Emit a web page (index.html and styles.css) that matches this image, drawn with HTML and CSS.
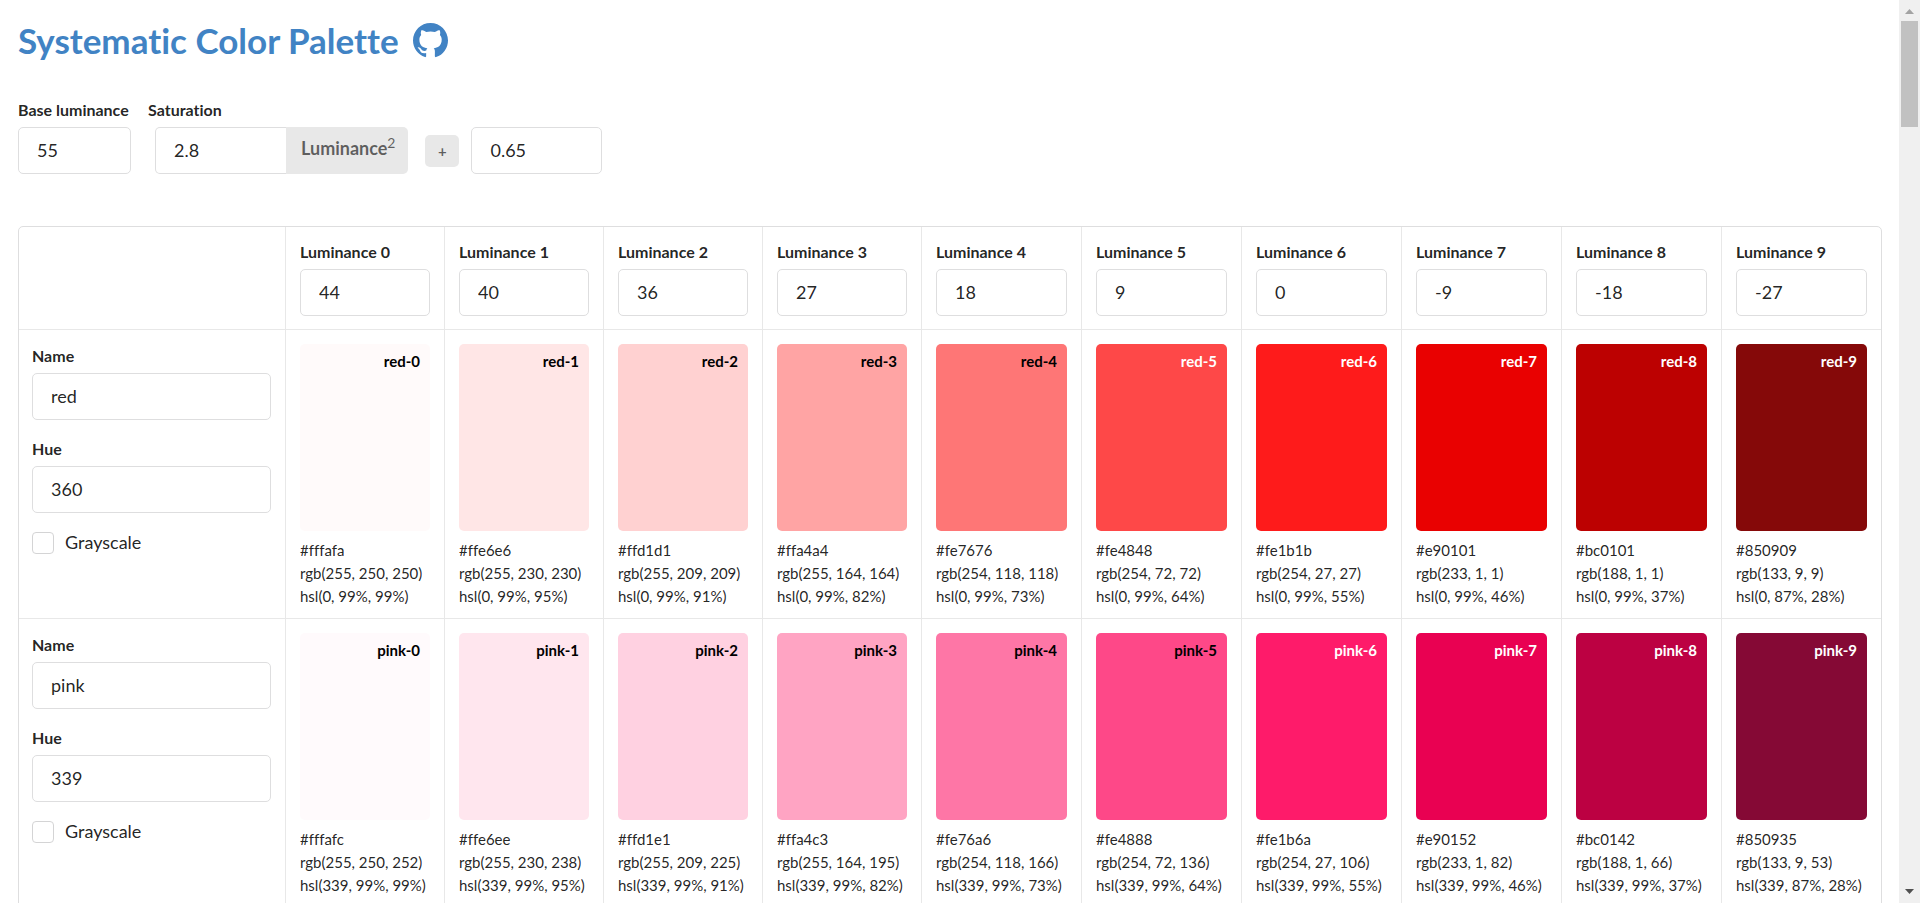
FILE: index.html
```html
<!DOCTYPE html>
<html lang="en">
<head>
<meta charset="utf-8">
<title>Systematic Color Palette</title>
<link rel="stylesheet" href="styles.css">
</head>
<body>
<div class="page">
<main class="content">
  <h1 class="title"><a class="title-link" href="#">Systematic Color Palette
    <svg class="github" viewBox="0 0 16 16" aria-hidden="true"><path fill="currentColor" d="M8 0C3.58 0 0 3.58 0 8c0 3.54 2.29 6.53 5.47 7.59.4.07.55-.17.55-.38 0-.19-.01-.82-.01-1.49-2.01.37-2.53-.49-2.69-.94-.09-.23-.48-.94-.82-1.13-.28-.15-.68-.52-.01-.53.63-.01 1.08.58 1.23.82.72 1.21 1.87.87 2.33.66.07-.52.28-.87.51-1.07-1.78-.2-3.64-.89-3.64-3.95 0-.87.31-1.59.82-2.15-.08-.2-.36-1.02.08-2.12 0 0 .67-.21 2.2.82.64-.18 1.32-.27 2-.27s1.36.09 2 .27c1.53-1.04 2.2-.82 2.2-.82.44 1.1.16 1.92.08 2.12.51.56.82 1.27.82 2.15 0 3.07-1.87 3.75-3.65 3.95.29.25.54.73.54 1.48 0 1.07-.01 1.93-.01 2.2 0 .21.15.46.55.38A8.01 8.01 0 0 0 16 8c0-4.42-3.58-8-8-8z"/></svg></a></h1>

  <form class="settings">
    <div class="field base">
      <label class="label" for="base">Base luminance</label>
      <input class="input" id="base" type="text" value="55">
    </div>
    <div class="field">
      <label class="label" for="factor">Saturation</label>
      <div class="formula">
        <div class="labeled">
          <input class="input factor" id="factor" type="text" value="2.8">
          <span class="unit">Luminance<sup class="sup">2</sup></span>
        </div>
        <span class="plus">+</span>
        <input class="input offset" type="text" value="0.65" aria-label="Saturation offset">
      </div>
    </div>
  </form>

  <table class="palette">
    <colgroup><col class="col-name"><col class="col-light" span="4"><col span="6"></colgroup>
    <thead>
      <tr>
        <th class="head"></th>
        <th class="head"><label class="label" for="l0">Luminance 0</label><input class="input" id="l0" type="text" value="44"></th>
        <th class="head"><label class="label" for="l1">Luminance 1</label><input class="input" id="l1" type="text" value="40"></th>
        <th class="head"><label class="label" for="l2">Luminance 2</label><input class="input" id="l2" type="text" value="36"></th>
        <th class="head"><label class="label" for="l3">Luminance 3</label><input class="input" id="l3" type="text" value="27"></th>
        <th class="head"><label class="label" for="l4">Luminance 4</label><input class="input" id="l4" type="text" value="18"></th>
        <th class="head"><label class="label" for="l5">Luminance 5</label><input class="input" id="l5" type="text" value="9"></th>
        <th class="head"><label class="label" for="l6">Luminance 6</label><input class="input" id="l6" type="text" value="0"></th>
        <th class="head"><label class="label" for="l7">Luminance 7</label><input class="input" id="l7" type="text" value="-9"></th>
        <th class="head"><label class="label" for="l8">Luminance 8</label><input class="input" id="l8" type="text" value="-18"></th>
        <th class="head"><label class="label" for="l9">Luminance 9</label><input class="input" id="l9" type="text" value="-27"></th>
      </tr>
    </thead>
    <tbody>
      <tr>
        <td class="cell">
          <div class="hue-form">
            <div class="field"><label class="label" for="name-red">Name</label><input class="input" id="name-red" type="text" value="red"></div>
            <div class="field"><label class="label" for="hue-red">Hue</label><input class="input" id="hue-red" type="text" value="360"></div>
            <label class="check"><input class="box" type="checkbox">Grayscale</label>
          </div>
        </td>
        <td class="cell"><div class="swatch" style="background:#fffafa">red-0</div>#fffafa<br>rgb(255, 250, 250)<br>hsl(0, 99%, 99%)</td>
        <td class="cell"><div class="swatch" style="background:#ffe6e6">red-1</div>#ffe6e6<br>rgb(255, 230, 230)<br>hsl(0, 99%, 95%)</td>
        <td class="cell"><div class="swatch" style="background:#ffd1d1">red-2</div>#ffd1d1<br>rgb(255, 209, 209)<br>hsl(0, 99%, 91%)</td>
        <td class="cell"><div class="swatch" style="background:#ffa4a4">red-3</div>#ffa4a4<br>rgb(255, 164, 164)<br>hsl(0, 99%, 82%)</td>
        <td class="cell"><div class="swatch" style="background:#fe7676">red-4</div>#fe7676<br>rgb(254, 118, 118)<br>hsl(0, 99%, 73%)</td>
        <td class="cell"><div class="swatch dark" style="background:#fe4848">red-5</div>#fe4848<br>rgb(254, 72, 72)<br>hsl(0, 99%, 64%)</td>
        <td class="cell"><div class="swatch dark" style="background:#fe1b1b">red-6</div>#fe1b1b<br>rgb(254, 27, 27)<br>hsl(0, 99%, 55%)</td>
        <td class="cell"><div class="swatch dark" style="background:#e90101">red-7</div>#e90101<br>rgb(233, 1, 1)<br>hsl(0, 99%, 46%)</td>
        <td class="cell"><div class="swatch dark" style="background:#bc0101">red-8</div>#bc0101<br>rgb(188, 1, 1)<br>hsl(0, 99%, 37%)</td>
        <td class="cell"><div class="swatch dark" style="background:#850909">red-9</div>#850909<br>rgb(133, 9, 9)<br>hsl(0, 87%, 28%)</td>
      </tr>
      <tr>
        <td class="cell">
          <div class="hue-form">
            <div class="field"><label class="label" for="name-pink">Name</label><input class="input" id="name-pink" type="text" value="pink"></div>
            <div class="field"><label class="label" for="hue-pink">Hue</label><input class="input" id="hue-pink" type="text" value="339"></div>
            <label class="check"><input class="box" type="checkbox">Grayscale</label>
          </div>
        </td>
        <td class="cell"><div class="swatch" style="background:#fffafc">pink-0</div>#fffafc<br>rgb(255, 250, 252)<br>hsl(339, 99%, 99%)</td>
        <td class="cell"><div class="swatch" style="background:#ffe6ee">pink-1</div>#ffe6ee<br>rgb(255, 230, 238)<br>hsl(339, 99%, 95%)</td>
        <td class="cell"><div class="swatch" style="background:#ffd1e1">pink-2</div>#ffd1e1<br>rgb(255, 209, 225)<br>hsl(339, 99%, 91%)</td>
        <td class="cell"><div class="swatch" style="background:#ffa4c3">pink-3</div>#ffa4c3<br>rgb(255, 164, 195)<br>hsl(339, 99%, 82%)</td>
        <td class="cell"><div class="swatch" style="background:#fe76a6">pink-4</div>#fe76a6<br>rgb(254, 118, 166)<br>hsl(339, 99%, 73%)</td>
        <td class="cell"><div class="swatch" style="background:#fe4888">pink-5</div>#fe4888<br>rgb(254, 72, 136)<br>hsl(339, 99%, 64%)</td>
        <td class="cell"><div class="swatch dark" style="background:#fe1b6a">pink-6</div>#fe1b6a<br>rgb(254, 27, 106)<br>hsl(339, 99%, 55%)</td>
        <td class="cell"><div class="swatch dark" style="background:#e90152">pink-7</div>#e90152<br>rgb(233, 1, 82)<br>hsl(339, 99%, 46%)</td>
        <td class="cell"><div class="swatch dark" style="background:#bc0142">pink-8</div>#bc0142<br>rgb(188, 1, 66)<br>hsl(339, 99%, 37%)</td>
        <td class="cell"><div class="swatch dark" style="background:#850935">pink-9</div>#850935<br>rgb(133, 9, 53)<br>hsl(339, 87%, 28%)</td>
      </tr>
    </tbody>
  </table>
</main>
<div class="scrollbar" aria-hidden="true">
  <svg class="arrow arrow-up" viewBox="0 0 9 5"><path d="M0 5L4.500 0L9 5z"/></svg>
  <div class="thumb"></div>
  <svg class="arrow arrow-down" viewBox="0 0 9 5"><path d="M0 0L4.500 5L9 0z"/></svg>
</div>
</div>
</body>
</html>
```
FILE: styles.css
```css
* { box-sizing: border-box; }
body {
  margin: 0;
  font-family: Lato, "Liberation Sans", sans-serif;
  font-size: 15px;
  line-height: 23px;
  font-variant-ligatures: none;
  color: rgba(0, 0, 0, .87);
  background: #fff;
}
.page { display: flex; height: 100vh; }
.content {
  flex: 1;
  min-width: 0;
  padding: 18px;
  padding-right: 17px;
  overflow-y: auto;
  scrollbar-width: none;
}
.title { margin: 0; font-size: 35px; line-height: 44px; font-weight: 700; }
.title-link {
  display: flex;
  align-items: center;
  gap: 14px;
  color: #4183c4;
  text-decoration: none;
}
.github { width: 35px; height: 35px; }

.settings { display: flex; gap: 17px; margin: 36px 0 52px; }
.base { width: 113px; }
.label {
  display: block;
  margin-bottom: 6px;
  font-size: 16px;
  font-weight: 700;
  text-align: left;
  white-space: nowrap;
}
.input {
  display: block;
  width: 100%;
  height: 47px;
  padding: 0 18px 2px;
  font: inherit;
  font-size: 18px;
  font-weight: 400;
  color: rgba(0, 0, 0, .87);
  background: #fff;
  border: 1px solid #dededf;
  border-radius: 5px;
}
.formula { display: flex; align-items: center; padding-left: 7px; }
.labeled { display: flex; margin-right: 17px; }
.factor { width: 131px; border-right: 0; border-radius: 5px 0 0 5px; }
.unit {
  padding: 10px 13px 10px 15px;
  font-size: 18px;
  color: rgba(0, 0, 0, .6);
  font-weight: 700;
  background: #e8e8e8;
  border-radius: 0 5px 5px 0;
}
.sup { font-size: 14px; line-height: 0; font-weight: 400; }
.plus {
  width: 34px;
  margin-right: 12px;
  line-height: 32px;
  font-size: 15px;
  font-weight: 700;
  text-align: center;
  color: rgba(0, 0, 0, .6);
  background: #e8e8e8;
  border-radius: 5px;
}
.offset { width: 131px; }

.palette {
  width: 100%;
  table-layout: fixed;
  border-collapse: separate;
  border-spacing: 0;
  border: 1px solid #dededf;
  border-radius: 5px;
}
.col-name { width: 266px; }
.col-light { width: 159px; }
.head, .cell {
  vertical-align: top;
  text-align: left;
  border-left: 1px solid #e8e8e8;
}
.head { padding: 13px 14px; }
.cell { padding: 14px 14px 10px; border-top: 1px solid #e8e8e8; white-space: nowrap; }
.head:first-child, .cell:first-child { border-left: 0; padding-left: 13px; }
.swatch {
  height: 187px;
  margin-bottom: 8px;
  padding: 6px 10px;
  font-weight: 700;
  text-align: right;
  color: #000;
  border-radius: 5px;
}
.dark { color: #fff; }
.hue-form { display: grid; gap: 17px; }
.check { display: flex; align-items: center; gap: 11px; padding-top: 1px; font-size: 18px; }
.box {
  appearance: none;
  width: 22px;
  height: 22px;
  margin: 0;
  background: #fff;
  border: 1px solid #d4d4d5;
  border-radius: 4px;
}

.scrollbar {
  display: flex;
  flex-direction: column;
  align-items: center;
  width: 21px;
  padding: 9px 0;
  background: #f0f0f0;
}
.arrow { width: 9px; height: 5px; }
.arrow-up { fill: #a3a3a3; }
.arrow-down { margin-top: auto; fill: #505050; }
.thumb { width: 17px; height: 106px; margin-top: 7px; background: #c1c1c1; }
```
